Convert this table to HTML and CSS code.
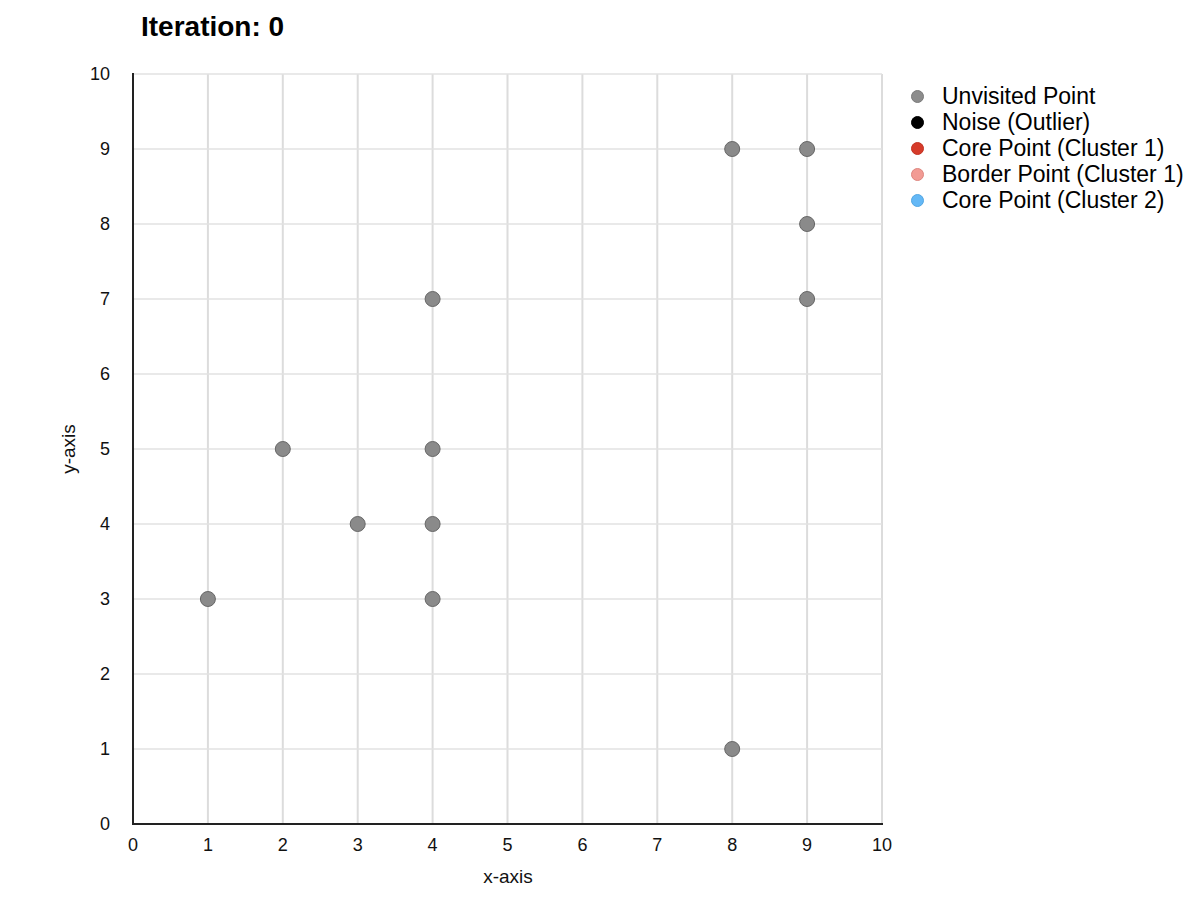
FILE: index.html
```html
<!DOCTYPE html>
<html>
<head>
<meta charset="utf-8">
<link rel="stylesheet" href="styles.css">
</head>
<body>
<h1 class="title">Iteration: 0</h1>
<div class="main">
<svg class="chart" width="900" height="850" viewBox="0 0 900 850">
  <g class="grid">
    <line x1="207.9" y1="24" x2="207.9" y2="774"/>
    <line x1="282.8" y1="24" x2="282.8" y2="774"/>
    <line x1="357.7" y1="24" x2="357.7" y2="774"/>
    <line x1="432.6" y1="24" x2="432.6" y2="774"/>
    <line x1="507.5" y1="24" x2="507.5" y2="774"/>
    <line x1="582.4" y1="24" x2="582.4" y2="774"/>
    <line x1="657.3" y1="24" x2="657.3" y2="774"/>
    <line x1="732.2" y1="24" x2="732.2" y2="774"/>
    <line x1="807.1" y1="24" x2="807.1" y2="774"/>
    <line x1="882" y1="24" x2="882" y2="774"/>
  </g>
  <g class="grid h">
    <line x1="133" y1="24" x2="882" y2="24"/>
    <line x1="133" y1="99" x2="882" y2="99"/>
    <line x1="133" y1="174" x2="882" y2="174"/>
    <line x1="133" y1="249" x2="882" y2="249"/>
    <line x1="133" y1="324" x2="882" y2="324"/>
    <line x1="133" y1="399" x2="882" y2="399"/>
    <line x1="133" y1="474" x2="882" y2="474"/>
    <line x1="133" y1="549" x2="882" y2="549"/>
    <line x1="133" y1="624" x2="882" y2="624"/>
    <line x1="133" y1="699" x2="882" y2="699"/>
  </g>
  <g class="axis">
    <line x1="133" y1="23" x2="133" y2="775"/>
    <line x1="132" y1="774" x2="883" y2="774"/>
  </g>
  <g class="ytick">
    <text x="110" y="24">10</text>
    <text x="110" y="99">9</text>
    <text x="110" y="174">8</text>
    <text x="110" y="249">7</text>
    <text x="110" y="324">6</text>
    <text x="110" y="399">5</text>
    <text x="110" y="474">4</text>
    <text x="110" y="549">3</text>
    <text x="110" y="624">2</text>
    <text x="110" y="699">1</text>
    <text x="110" y="774">0</text>
  </g>
  <g class="xtick">
    <text x="133" y="801">0</text>
    <text x="207.9" y="801">1</text>
    <text x="282.8" y="801">2</text>
    <text x="357.7" y="801">3</text>
    <text x="432.6" y="801">4</text>
    <text x="507.5" y="801">5</text>
    <text x="582.4" y="801">6</text>
    <text x="657.3" y="801">7</text>
    <text x="732.2" y="801">8</text>
    <text x="807.1" y="801">9</text>
    <text x="882" y="801">10</text>
  </g>
  <text class="label" x="508" y="833">x-axis</text>
  <text class="label" transform="translate(75 399) rotate(-90)">y-axis</text>
  <g class="pts">
    <circle cx="207.9" cy="549" r="7.5"/>
    <circle cx="282.8" cy="399" r="7.5"/>
    <circle cx="357.7" cy="474" r="7.5"/>
    <circle cx="432.6" cy="549" r="7.5"/>
    <circle cx="432.6" cy="474" r="7.5"/>
    <circle cx="432.6" cy="399" r="7.5"/>
    <circle cx="432.6" cy="249" r="7.5"/>
    <circle cx="732.2" cy="699" r="7.5"/>
    <circle cx="732.2" cy="99" r="7.5"/>
    <circle cx="807.1" cy="99" r="7.5"/>
    <circle cx="807.1" cy="174" r="7.5"/>
    <circle cx="807.1" cy="249" r="7.5"/>
  </g>
</svg>
<ul class="legend">
  <li class="item"><span class="dot unvisited"></span>Unvisited Point</li>
  <li class="item"><span class="dot noise"></span>Noise (Outlier)</li>
  <li class="item"><span class="dot core1"></span>Core Point (Cluster 1)</li>
  <li class="item"><span class="dot border1"></span>Border Point (Cluster 1)</li>
  <li class="item"><span class="dot core2"></span>Core Point (Cluster 2)</li>
</ul>
</div>
</body>
</html>
```
FILE: styles.css
```css
html, body {
  margin: 0;
  padding: 0;
  background: #fff;
}
body {
  width: 1200px;
  height: 900px;
  overflow: hidden;
  font-family: "Liberation Sans", Arial, sans-serif;
  color: #000;
}
.title {
  margin: 0;
  padding: 11px 0 7px 141px;
  font-size: 28px;
  line-height: 32px;
  font-weight: 700;
}
.main {
  display: flex;
  height: 850px;
}
.chart {
  flex: none;
  display: block;
}
.grid line {
  stroke: #dcdcdc;
  stroke-width: 2;
}
.grid.h line {
  stroke: #e2e2e2;
  stroke-width: 1.5;
}
.axis line {
  stroke: #222;
  stroke-width: 2;
}
.ytick text {
  font-family: "Liberation Sans", Arial, sans-serif;
  font-size: 18px;
  text-anchor: end;
  dominant-baseline: central;
  fill: #111;
}
.xtick text {
  font-family: "Liberation Sans", Arial, sans-serif;
  font-size: 18px;
  text-anchor: middle;
  fill: #111;
}
.label {
  font-family: "Liberation Sans", Arial, sans-serif;
  font-size: 19px;
  text-anchor: middle;
  fill: #111;
}
.pts circle {
  fill: #8a8a8a;
  stroke: #666;
  stroke-width: 1;
}
.legend {
  list-style: none;
  margin: 0;
  padding: 33px 0 0 11px;
}
.item {
  display: flex;
  align-items: center;
  gap: 18px;
  height: 26px;
  font-size: 23px;
  line-height: 26px;
  white-space: nowrap;
}
.dot {
  flex: none;
  width: 11px;
  height: 11px;
  border-radius: 50%;
  border: 1px solid transparent;
}
.unvisited { background: #8c8c8c; border-color: #7a7a7a; }
.noise { background: #000; border-color: #000; }
.core1 { background: #d63b2a; border-color: #c23323; }
.border1 { background: #f29b94; border-color: #de857e; }
.core2 { background: #64b8f6; border-color: #52a6e2; }
```
